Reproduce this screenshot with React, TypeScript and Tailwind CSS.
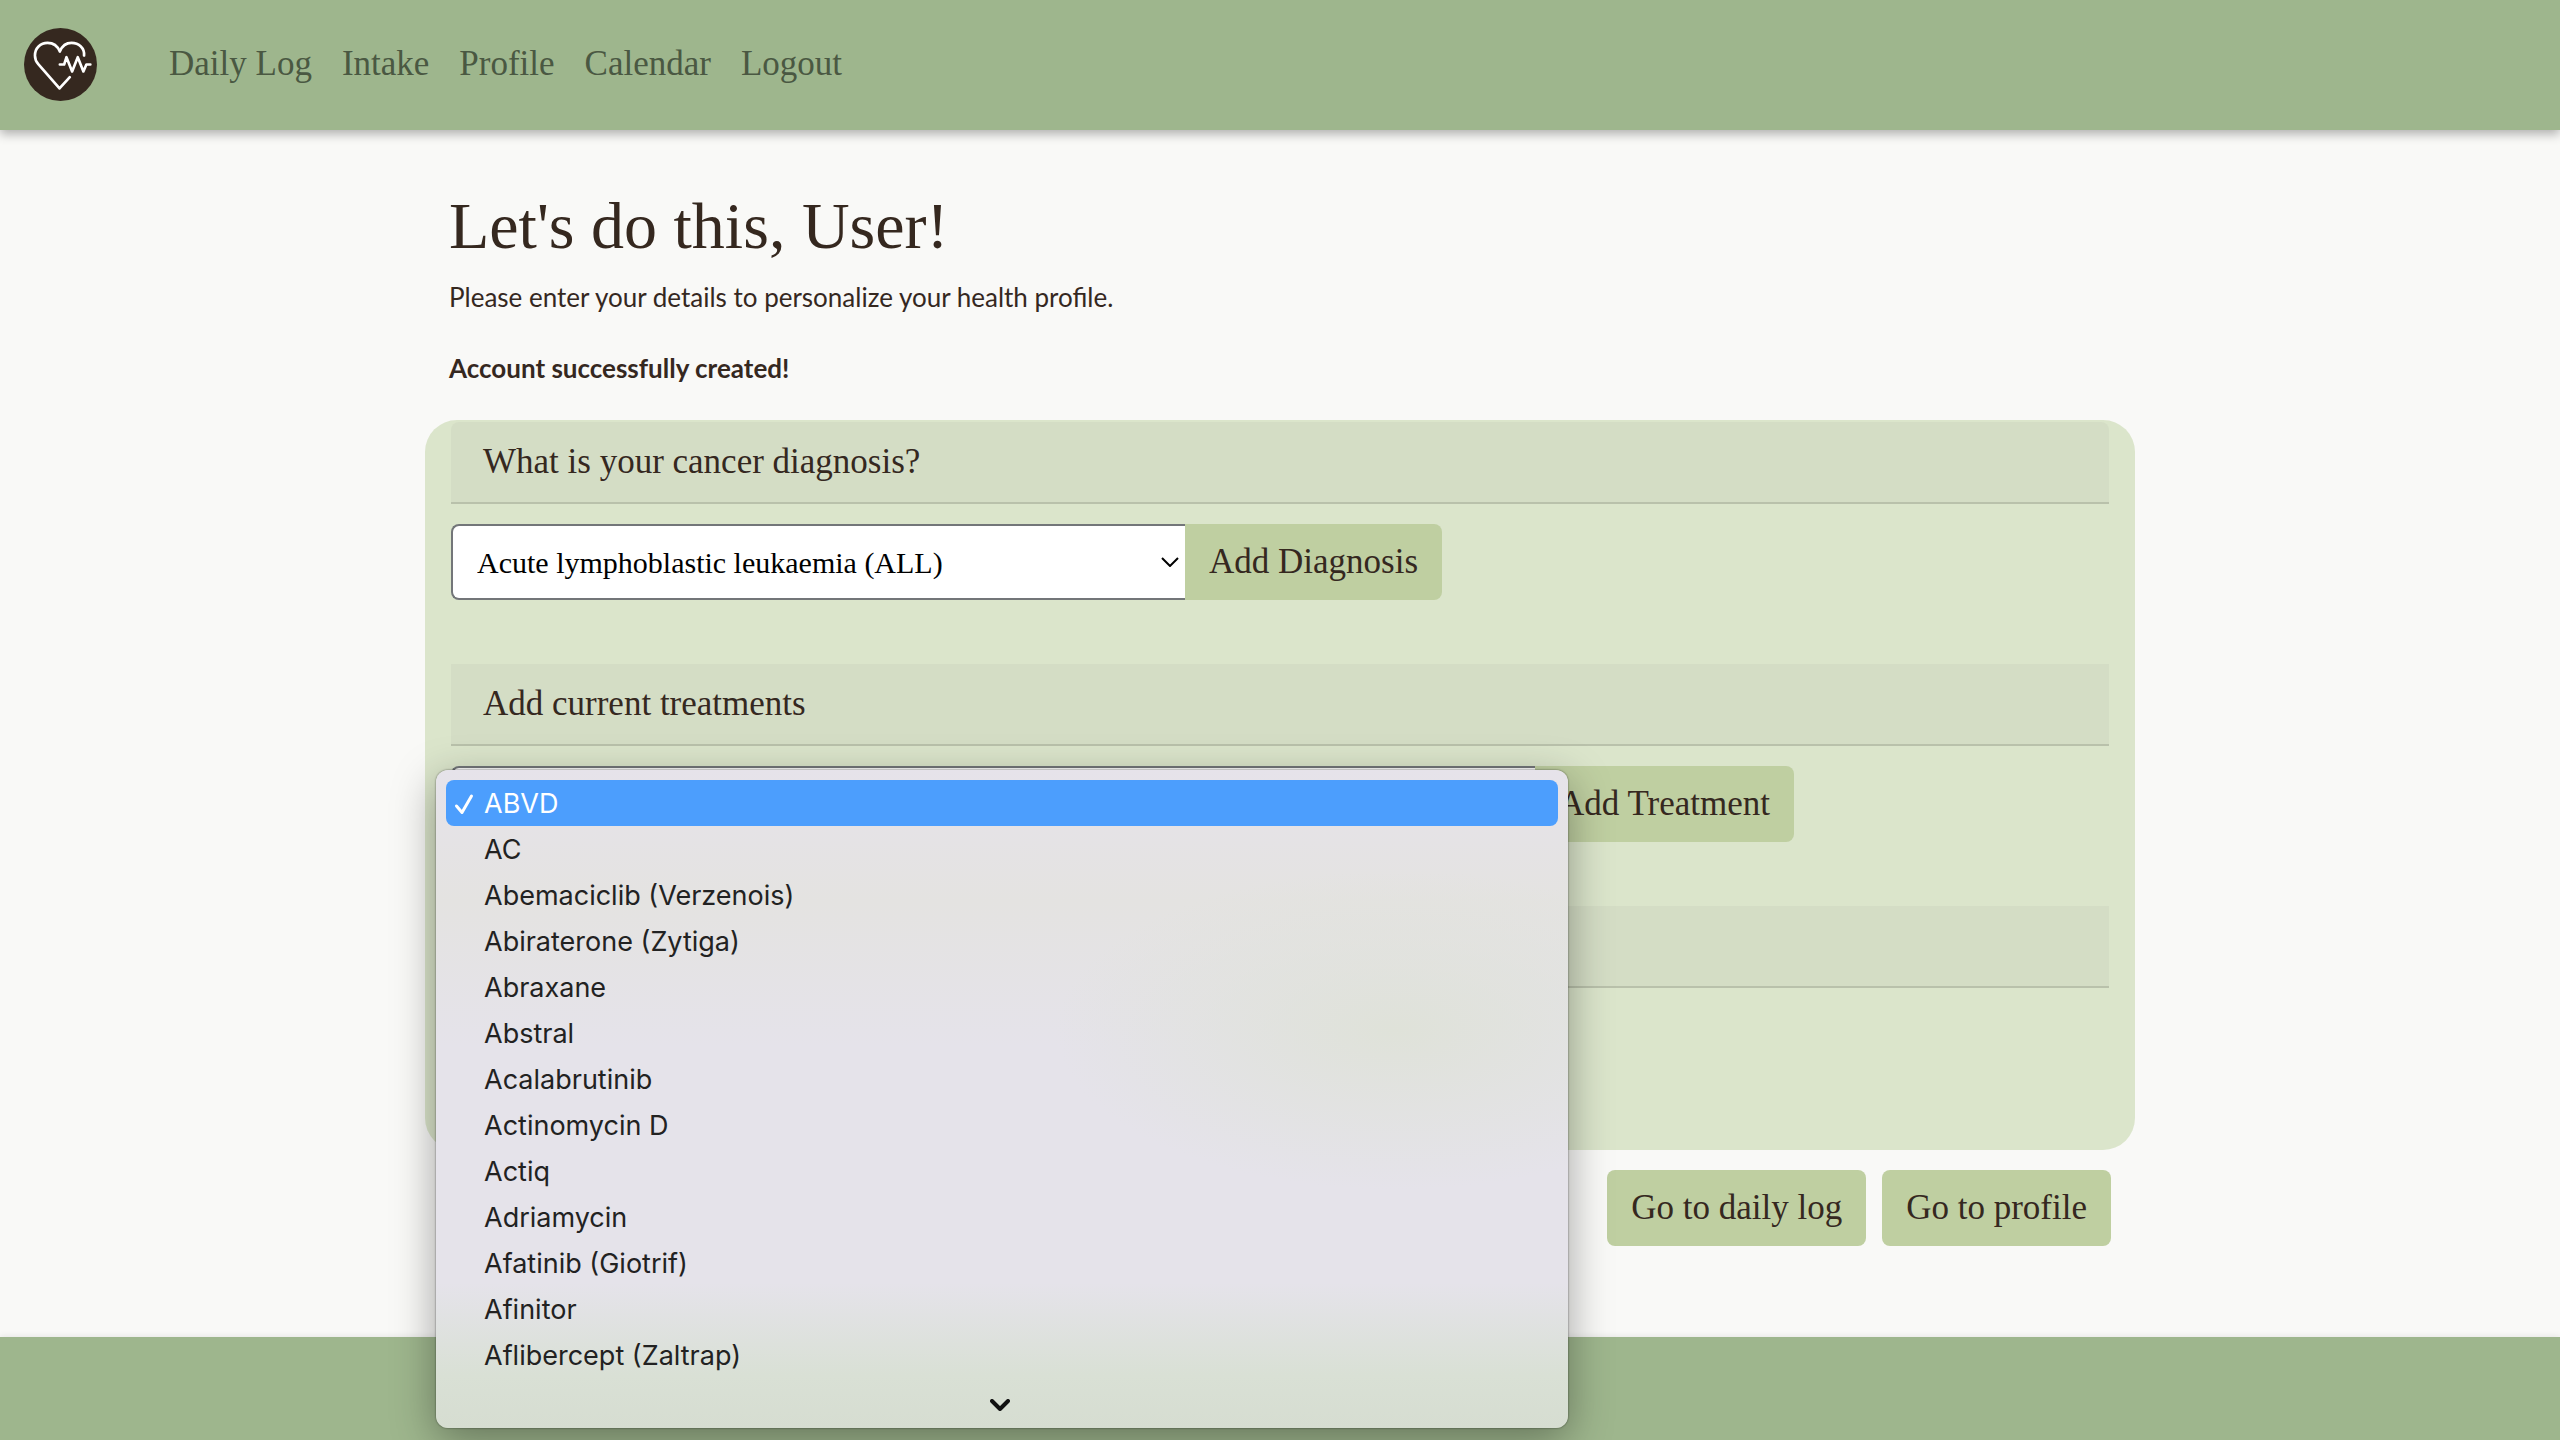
import React from "react";

const navLinks = ["Daily Log", "Intake", "Profile", "Calendar", "Logout"];

const treatments = [
  "ABVD",
  "AC",
  "Abemaciclib (Verzenois)",
  "Abiraterone (Zytiga)",
  "Abraxane",
  "Abstral",
  "Acalabrutinib",
  "Actinomycin D",
  "Actiq",
  "Adriamycin",
  "Afatinib (Giotrif)",
  "Afinitor",
  "Aflibercept (Zaltrap)",
];

function Logo() {
  return (
    <svg viewBox="70 81 220 220" className="size-[73px]" fill="none" aria-hidden="true">
      <circle cx="180" cy="191" r="110" fill="#35281f" />
      <g stroke="#ffffff" strokeWidth="8" strokeLinecap="round" strokeLinejoin="round">
        <path d="M251 164C253 142 236 126 213 126C197 126 185 135 178 152C171 135 158 126 141 126C119 126 103 142 103 164C103 174 106 182 113 190L177 263L208 229" />
        <path d="M178 191H191L198 169L215 212L232 169L249 212L258 191H270" />
      </g>
    </svg>
  );
}

function SectionTitle({ children, first = false }: { children?: React.ReactNode; first?: boolean }) {
  return (
    <div
      className={
        first
          ? "flex h-[82px] items-center rounded-t-lg border-b-2 border-[#b9c1ab] bg-[#d4ddc5] px-8"
          : "flex h-[82px] items-center border-b-2 border-[#b9c1ab] bg-[#d4ddc5] px-8"
      }
    >
      {children}
    </div>
  );
}

function ActionButton({ children, joined = false }: { children: React.ReactNode; joined?: boolean }) {
  return (
    <button
      type="button"
      className={
        joined
          ? "h-[76px] rounded-r-lg bg-[#bfcfa1] px-6 text-[35px] whitespace-nowrap"
          : "h-[76px] rounded-lg bg-[#bfcfa1] px-6 text-[35px] whitespace-nowrap"
      }
    >
      {children}
    </button>
  );
}

function SelectChevron() {
  return (
    <svg
      viewBox="0 0 18 10"
      className="pointer-events-none absolute top-1/2 right-1.5 h-2.5 w-[18px] -translate-y-1/2"
      fill="none"
      stroke="#000000"
      strokeWidth="2"
      aria-hidden="true"
    >
      <path d="M1 1L9 9L17 1" />
    </svg>
  );
}

const selectClass =
  "h-[76px] w-full appearance-none rounded-l-lg border-2 border-r-0 border-[#737679] bg-white pl-6 pr-10 text-[30px] text-black";

export default function App() {
  return (
    <div className="flex min-h-screen flex-col bg-[#f9f9f7] font-['Liberation_Serif',serif] text-[#35281f]">
      <header className="flex h-[130px] items-center gap-[72px] bg-[#9eb68d] px-6 pb-0.5 shadow-[0_4px_10px_rgba(0,0,0,0.3)]">
        <a href="#home" aria-label="Home">
          <Logo />
        </a>
        <nav className="flex gap-[30px]">
          {navLinks.map((label) => (
            <a key={label} href="#top" className="text-[35px] text-[#4a5842]">
              {label}
            </a>
          ))}
        </nav>
      </header>

      <main className="mx-auto w-full max-w-[1710px] grow pt-14">
        <div className="px-6">
          <h1 className="text-[66px] leading-[80px]">Let's do this, User!</h1>
          <p className="mt-[11px] font-[Lato,sans-serif] text-[26px] leading-10">
            Please enter your details to personalize your health profile.
          </p>
          <p className="mt-[31px] font-[Lato,sans-serif] text-[26px] leading-10 font-bold">
            Account successfully created!
          </p>
        </div>

        <div className="mt-8 rounded-[32px] bg-[#dbe5cb] px-[26px] pt-0.5">
          <section className="pb-16">
            <SectionTitle first>
              <label htmlFor="diagnosis" className="text-[35px]">
                What is your cancer diagnosis?
              </label>
            </SectionTitle>
            <div className="mt-5 flex">
              <div className="relative w-[734px]">
                <select id="diagnosis" className={selectClass}>
                  <option>Acute lymphoblastic leukaemia (ALL)</option>
                </select>
                <SelectChevron />
              </div>
              <ActionButton joined>Add Diagnosis</ActionButton>
            </div>
          </section>

          <section className="pb-16">
            <SectionTitle>
              <label htmlFor="treatment" className="text-[35px]">
                Add current treatments
              </label>
            </SectionTitle>
            <div className="mt-5 flex">
              <div className="relative w-[1084px]">
                <select id="treatment" className={selectClass}>
                  {treatments.map((name) => (
                    <option key={name}>{name}</option>
                  ))}
                </select>
                <div className="absolute top-1 -left-[15px] z-10 w-[1132px] rounded-xl bg-[radial-gradient(ellipse_340px_160px_at_960px_260px,#dfe2d9,transparent),linear-gradient(to_bottom,#e6e3ea_0%,#e4e3e1_20%,#e5e3ea_42%,#e5e3ea_78%,#d9e0d5_92%,#d6ddd1_100%)] px-2.5 pt-2.5 shadow-[0_0_2px_rgba(0,0,0,0.6),0_12px_44px_rgba(0,0,0,0.36)]">
                  <ul role="listbox" aria-label="Treatments" className="font-[Inter,sans-serif] text-[27px] text-[#222222]">
                    {treatments.map((name, i) => (
                      <li
                        key={name}
                        role="option"
                        aria-selected={i === 0}
                        className={
                          i === 0
                            ? "flex h-[46px] items-center rounded-lg bg-[#4c9efd] pt-0.5 pl-2 text-white"
                            : "flex h-[46px] items-center pt-0.5 pl-2"
                        }
                      >
                        <span className="w-[30px]">
                          {i === 0 && (
                            <svg viewBox="0 0 20 22" className="h-[22px] w-5" fill="none" stroke="currentColor" strokeWidth="3" strokeLinecap="round" strokeLinejoin="round" aria-hidden="true">
                              <path d="M2.500 13L8 19.500L17.500 3" />
                            </svg>
                          )}
                        </span>
                        {name}
                      </li>
                    ))}
                  </ul>
                  <div className="flex h-[50px] items-center justify-center pt-1 pr-1">
                    <svg viewBox="0 0 20 12" className="h-3 w-5" fill="none" stroke="#111111" strokeWidth="4" strokeLinecap="round" strokeLinejoin="round" aria-hidden="true">
                      <path d="M2 2L10 10L18 2" />
                    </svg>
                  </div>
                </div>
              </div>
              <ActionButton joined>Add Treatment</ActionButton>
            </div>
          </section>

          <section className="pb-[162px]">
            <SectionTitle />
          </section>
        </div>

        <div className="mt-5 flex justify-end gap-4 px-6">
          <ActionButton>Go to daily log</ActionButton>
          <ActionButton>Go to profile</ActionButton>
        </div>
      </main>

      <footer className="h-[103px] bg-[#9eb68d] shadow-[0_-1px_6px_rgba(0,0,0,0.08)]" />
    </div>
  );
}
